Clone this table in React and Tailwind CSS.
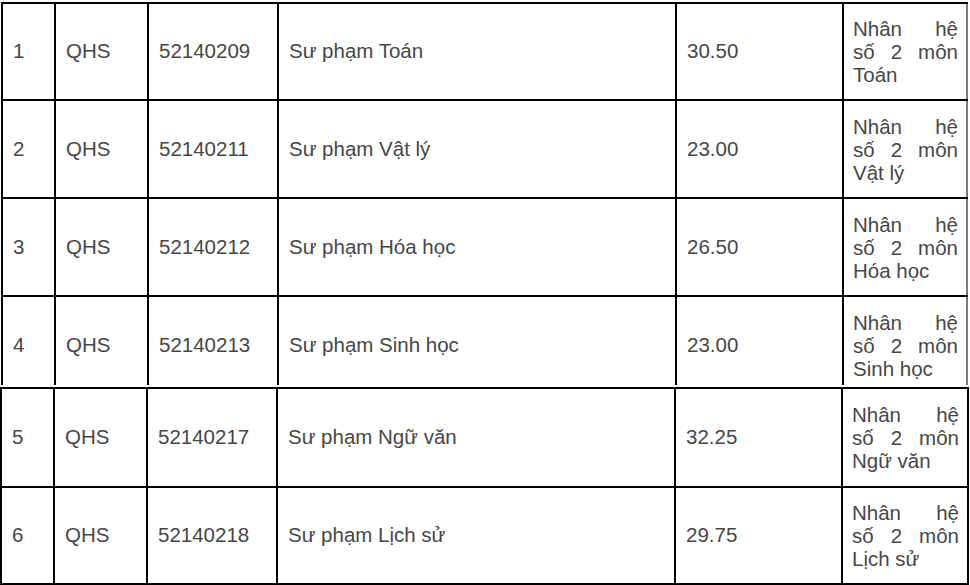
const upperRows = [
  { h: 'h-[97px]', cells: ['1', 'QHS', '52140209', 'Sư phạm Toán', '30.50'], subject: 'Toán' },
  { h: 'h-[98px]', cells: ['2', 'QHS', '52140211', 'Sư phạm Vật lý', '23.00'], subject: 'Vật lý' },
  { h: 'h-[98px]', cells: ['3', 'QHS', '52140212', 'Sư phạm Hóa học', '26.50'], subject: 'Hóa học' },
  { h: 'h-[98px]', cells: ['4', 'QHS', '52140213', 'Sư phạm Sinh học', '23.00'], subject: 'Sinh học' },
];

const lowerRows = [
  { h: 'h-[99px]', cells: ['5', 'QHS', '52140217', 'Sư phạm Ngữ văn', '32.25'], subject: 'Ngữ văn' },
  { h: 'h-[97px]', cells: ['6', 'QHS', '52140218', 'Sư phạm Lịch sử', '29.75'], subject: 'Lịch sử' },
];

const colW = ['w-[53px]', 'w-[93px]', 'w-[130px]', 'w-[398px]', 'w-[167px]'];

function Note({ subject }) {
  // justified 3-line note, as in the source table
  return (
    <div className="w-full leading-[23px]">
      <div className="flex justify-between"><span>Nhân</span><span>hệ</span></div>
      <div className="flex justify-between"><span>số</span><span>2</span><span>môn</span></div>
      <div>{subject}</div>
    </div>
  );
}

function Row({ row, lastW, lastBorder }) {
  return (
    <div className={`flex ${row.h} border-b-2 border-black`}>
      {row.cells.map((c, i) => (
        <div key={i} className={`${colW[i]} shrink-0 flex items-center pl-[10px] border-r-2 border-black`}>
          {c}
        </div>
      ))}
      <div className={`${lastW} shrink-0 flex items-center pl-[9px] pr-[8px] border-r-2 ${lastBorder}`}>
        <Note subject={row.subject} />
      </div>
    </div>
  );
}

export default function App() {
  return (
    <div
      className="w-[970px] h-[585px] bg-white overflow-hidden text-[20.5px] text-[#474747]"
      style={{ fontFamily: '"Liberation Sans", Arial, sans-serif' }}
    >
      <div className="mt-[2px] ml-[1px] w-[967px] h-[383px] overflow-hidden border-t-2 border-l-2 border-black">
        {upperRows.map((r) => (
          <Row key={r.cells[0]} row={r} lastW="w-[124px]" lastBorder="border-[#7a7a7a]" />
        ))}
      </div>
      <div className="mt-[2px] w-[969px] border-t-2 border-l-2 border-black">
        {lowerRows.map((r) => (
          <Row key={r.cells[0]} row={r} lastW="w-[126px]" lastBorder="border-black" />
        ))}
      </div>
    </div>
  );
}
